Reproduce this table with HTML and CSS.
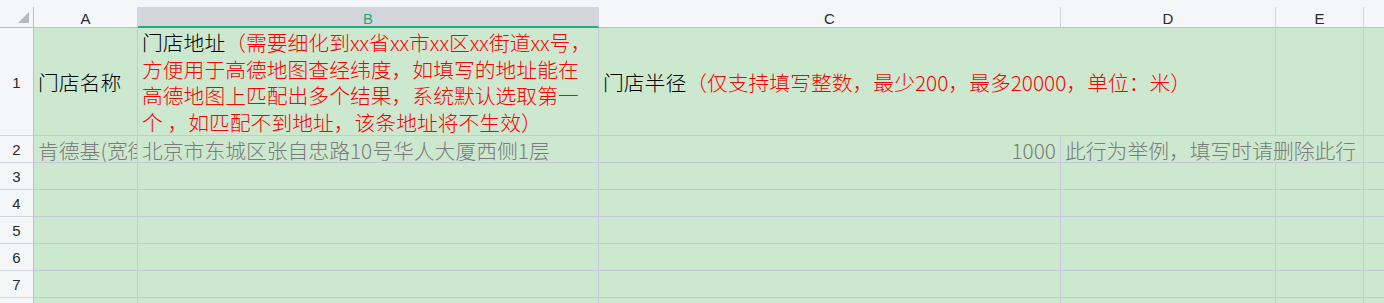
FILE: index.html
```html
<!DOCTYPE html>
<html lang="zh-CN">
<head>
<meta charset="utf-8">
<title>门店导入模板</title>
<link rel="stylesheet" href="styles.css">
</head>
<body>
<div class="sheet">
  <div class="topstrip"></div>
  <div class="grid">
    <div class="corner">
      <svg class="corner-tri" width="11" height="11" viewBox="0 0 11 11"><polygon points="11,0 11,11 0,11" fill="#b7b9bd"/></svg>
    </div>
    <div class="colhdr">A</div>
    <div class="colhdr sel">B</div>
    <div class="colhdr">C</div>
    <div class="colhdr">D</div>
    <div class="colhdr">E</div>
    <div class="colhdr last"></div>

    <div class="rowhdr">1</div>
    <div class="cell mid">门店名称</div>
    <div class="cell mid multi">门店地址<span class="red">（需要细化到xx省xx市xx区xx街道xx号，<br>方便用于高德地图查经纬度，如填写的地址能在<br>高德地图上匹配出多个结果，系统默认选取第一<br>个 ，如匹配不到地址，该条地址将不生效）</span></div>
    <div class="cell mid span2">门店半径<span class="red">（仅支持填写整数，最少200，最多20000，单位：米）</span></div>
    <div class="cell"></div>
    <div class="cell last"></div>

    <div class="rowhdr">2</div>
    <div class="cell mid gray">肯德基(宽街店)</div>
    <div class="cell mid gray">北京市东城区张自忠路10号华人大厦西侧1层</div>
    <div class="cell mid gray right">1000</div>
    <div class="cell mid gray span2">此行为举例，填写时请删除此行</div>
    <div class="cell last"></div>

    <div class="rowhdr">3</div>
    <div class="cell"></div><div class="cell"></div><div class="cell"></div><div class="cell"></div><div class="cell"></div><div class="cell last"></div>
    <div class="rowhdr">4</div>
    <div class="cell"></div><div class="cell"></div><div class="cell"></div><div class="cell"></div><div class="cell"></div><div class="cell last"></div>
    <div class="rowhdr">5</div>
    <div class="cell"></div><div class="cell"></div><div class="cell"></div><div class="cell"></div><div class="cell"></div><div class="cell last"></div>
    <div class="rowhdr">6</div>
    <div class="cell"></div><div class="cell"></div><div class="cell"></div><div class="cell"></div><div class="cell"></div><div class="cell last"></div>
    <div class="rowhdr">7</div>
    <div class="cell"></div><div class="cell"></div><div class="cell"></div><div class="cell"></div><div class="cell"></div><div class="cell last"></div>
    <div class="rowhdr"></div>
    <div class="cell"></div><div class="cell"></div><div class="cell"></div><div class="cell"></div><div class="cell"></div><div class="cell last"></div>
  </div>
</div>
</body>
</html>
```

FILE: styles.css
```css
* { box-sizing: border-box; }
html, body {
  margin: 0;
  padding: 0;
  width: 1384px;
  height: 303px;
  overflow: hidden;
  background: #f5f6f8;
}
.sheet {
  width: 1384px;
  height: 303px;
  overflow: hidden;
  font-family: "Noto Sans CJK SC", "Noto Sans", sans-serif;
}
.topstrip {
  height: 7px;
  background: #f5f6f8;
}
.grid {
  display: grid;
  grid-template-columns: 34px 104px 461px 462px 215px 88px 1fr;
  grid-template-rows: 21px 108px repeat(7, 27px);
}
.corner {
  position: relative;
  background: #f5f6f8;
  border-right: 1px solid #bcc0cb;
  border-bottom: 1px solid #bcc0cb;
}
.corner-tri {
  position: absolute;
  right: 4px;
  bottom: 4px;
}
.colhdr {
  background: #f5f6f8;
  border-right: 1px solid #d3d6de;
  border-bottom: 1px solid #bcc0cb;
  font-family: "Liberation Sans", "Noto Sans", sans-serif;
  font-size: 15px;
  color: #2b2b2b;
  display: flex;
  align-items: center;
  justify-content: center;
  padding-top: 3px;
}
.colhdr.sel {
  background: #d4d6dd;
  color: #1fa877;
  border-bottom: 2px solid #1fb07c;
}
.colhdr.last { border-right: none; }
.rowhdr {
  background: #f5f6f8;
  border-right: 1px solid #bcc0cb;
  border-bottom: 1px solid #d0d3dc;
  font-family: "Liberation Sans", "Noto Sans", sans-serif;
  font-size: 15px;
  color: #2b2b2b;
  display: flex;
  align-items: center;
  justify-content: center;
  padding-top: 1px;
}
.cell {
  background: #cce8cf;
  border-right: 1px solid #c6c8da;
  border-bottom: 1px solid #c6c8da;
  font-size: 20.8px;
  font-weight: 300;
  line-height: 27px;
  color: #000;
  white-space: nowrap;
  overflow: hidden;
  padding: 0 4px;
  min-width: 0;
}
.cell.last { border-right: none; }
.cell.mid {
  display: flex;
  align-items: center;
  padding-top: 2px;
}
.cell.multi {
  display: block;
  line-height: 26.6px;
  padding-top: 1px;
}
.cell.span2 { grid-column: span 2; }
.cell.right { justify-content: flex-end; }
.red { color: #ff0000; }
.gray { color: #7b7b7b; }
```
